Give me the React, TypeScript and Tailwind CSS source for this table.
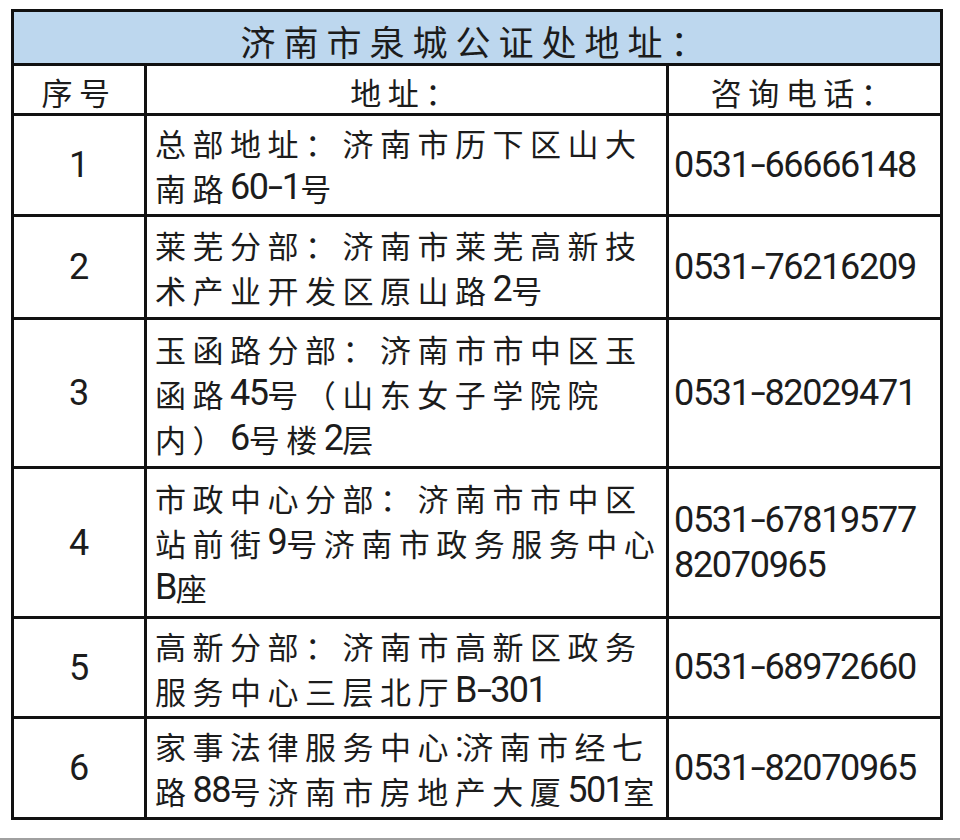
import React from "react";

const CJK = '"Noto Sans CJK SC", "Noto Sans", sans-serif';
const LAT = 'Roboto, "Liberation Sans", Arial, sans-serif';

function Latin({ text, className }: { text: string; className: string }) {
  const bits = text.split(/(-)/).filter((b) => b.length > 0);
  return (
    <span className={className} style={{ fontFamily: LAT }}>
      {bits.map((b, i) =>
        b === "-" ? (
          <span key={i} className="inline-block scale-x-150 mx-[3px]">
            -
          </span>
        ) : (
          <React.Fragment key={i}>{b}</React.Fragment>
        )
      )}
    </span>
  );
}

function Mixed({ text, cjkClass, latClass }: { text: string; cjkClass: string; latClass: string }) {
  const parts = text.split(/([\u3000-\u9fff\uff00-\uffef]+)/).filter((p) => p.length > 0);
  return (
    <>
      {parts.map((p, i) =>
        /[\u3000-\u9fff\uff00-\uffef]/.test(p) ? (
          <span key={i} className={cjkClass} style={{ fontFamily: CJK }}>
            {p}
          </span>
        ) : (
          <Latin key={i} text={p} className={latClass} />
        )
      )}
    </>
  );
}

const rows: { n: string; h: string; lines: string[]; phones: string[] }[] = [
  { n: "1", h: "h-[101px]", lines: ["总部地址：济南市历下区山大", "南路60-1号"], phones: ["0531-66666148"] },
  { n: "2", h: "h-[103px]", lines: ["莱芜分部：济南市莱芜高新技", "术产业开发区原山路2号"], phones: ["0531-76216209"] },
  {
    n: "3",
    h: "h-[149px]",
    lines: ["玉函路分部：济南市市中区玉", "函路45号（山东女子学院院", "内）6号楼2层"],
    phones: ["0531-82029471"],
  },
  {
    n: "4",
    h: "h-[150px]",
    lines: ["市政中心分部：济南市市中区", "站前街9号济南市政务服务中心", "B座"],
    phones: ["0531-67819577", "82070965"],
  },
  { n: "5", h: "h-[100px]", lines: ["高新分部：济南市高新区政务", "服务中心三层北厅B-301"], phones: ["0531-68972660"] },
  {
    n: "6",
    h: "h-[101px]",
    lines: ["家事法律服务中心:济南市经七", "路88号济南市房地产大厦501室"],
    phones: ["0531-82070965"],
  },
];

export default function App() {
  return (
    <div className="h-[840px] w-[960px] bg-white flex flex-col text-[#1c1c1c]">
      <div className="mt-[9px] ml-[11px] w-[932px] border-[3px] border-[#111]">
        {/* Title */}
        <div className="h-[51px] bg-[#bdd7ee] flex items-center justify-center pt-[6px]">
          <span
            className="text-[35px] tracking-[8px] leading-none whitespace-nowrap"
            style={{ fontFamily: CJK }}
          >
            济南市泉城公证处地址：
          </span>
        </div>
        {/* Header */}
        <div className="h-[50px] border-t-[3px] border-[#111] flex">
          <div className="w-[130px] flex items-center justify-center pt-[4px]">
            <span className="text-[31px] tracking-[6.5px] leading-none whitespace-nowrap" style={{ fontFamily: CJK }}>
              序号
            </span>
          </div>
          <div className="w-[522px] border-l-[3px] border-[#111] flex items-center justify-center pt-[4px]">
            <span className="text-[31px] tracking-[6.5px] leading-none whitespace-nowrap" style={{ fontFamily: CJK }}>
              地址：
            </span>
          </div>
          <div className="flex-1 border-l-[3px] border-[#111] flex items-center justify-center pt-[4px]">
            <span className="text-[31px] tracking-[6.5px] leading-none whitespace-nowrap" style={{ fontFamily: CJK }}>
              咨询电话：
            </span>
          </div>
        </div>
        {rows.map((r) => (
          <div key={r.n} className={`${r.h} border-t-[3px] border-[#111] flex`}>
            <div className="w-[130px] flex items-center justify-center">
              <span className="text-[36px] leading-none" style={{ fontFamily: LAT }}>
                {r.n}
              </span>
            </div>
            <div className="w-[522px] border-l-[3px] border-[#111] flex flex-col justify-center pl-[8px]">
              {r.lines.map((l, i) => (
                <div key={i} className="h-[45px] leading-[45px] whitespace-nowrap flex items-center">
                  <Mixed
                    text={l}
                    cjkClass="text-[31px] tracking-[6.5px]"
                    latClass="text-[36px] tracking-[-1.6px]"
                  />
                </div>
              ))}
            </div>
            <div className="flex-1 border-l-[3px] border-[#111] flex flex-col justify-center pl-[5px]">
              {r.phones.map((p, i) => (
                <div key={i} className="h-[45px] leading-[45px] whitespace-nowrap flex items-center">
                  <Latin text={p} className="text-[36px] tracking-[-1.3px]" />
                </div>
              ))}
            </div>
          </div>
        ))}
      </div>
      <div className="flex-1" />
      <div className="h-[2px] bg-[#a0a0a0]" />
    </div>
  );
}
